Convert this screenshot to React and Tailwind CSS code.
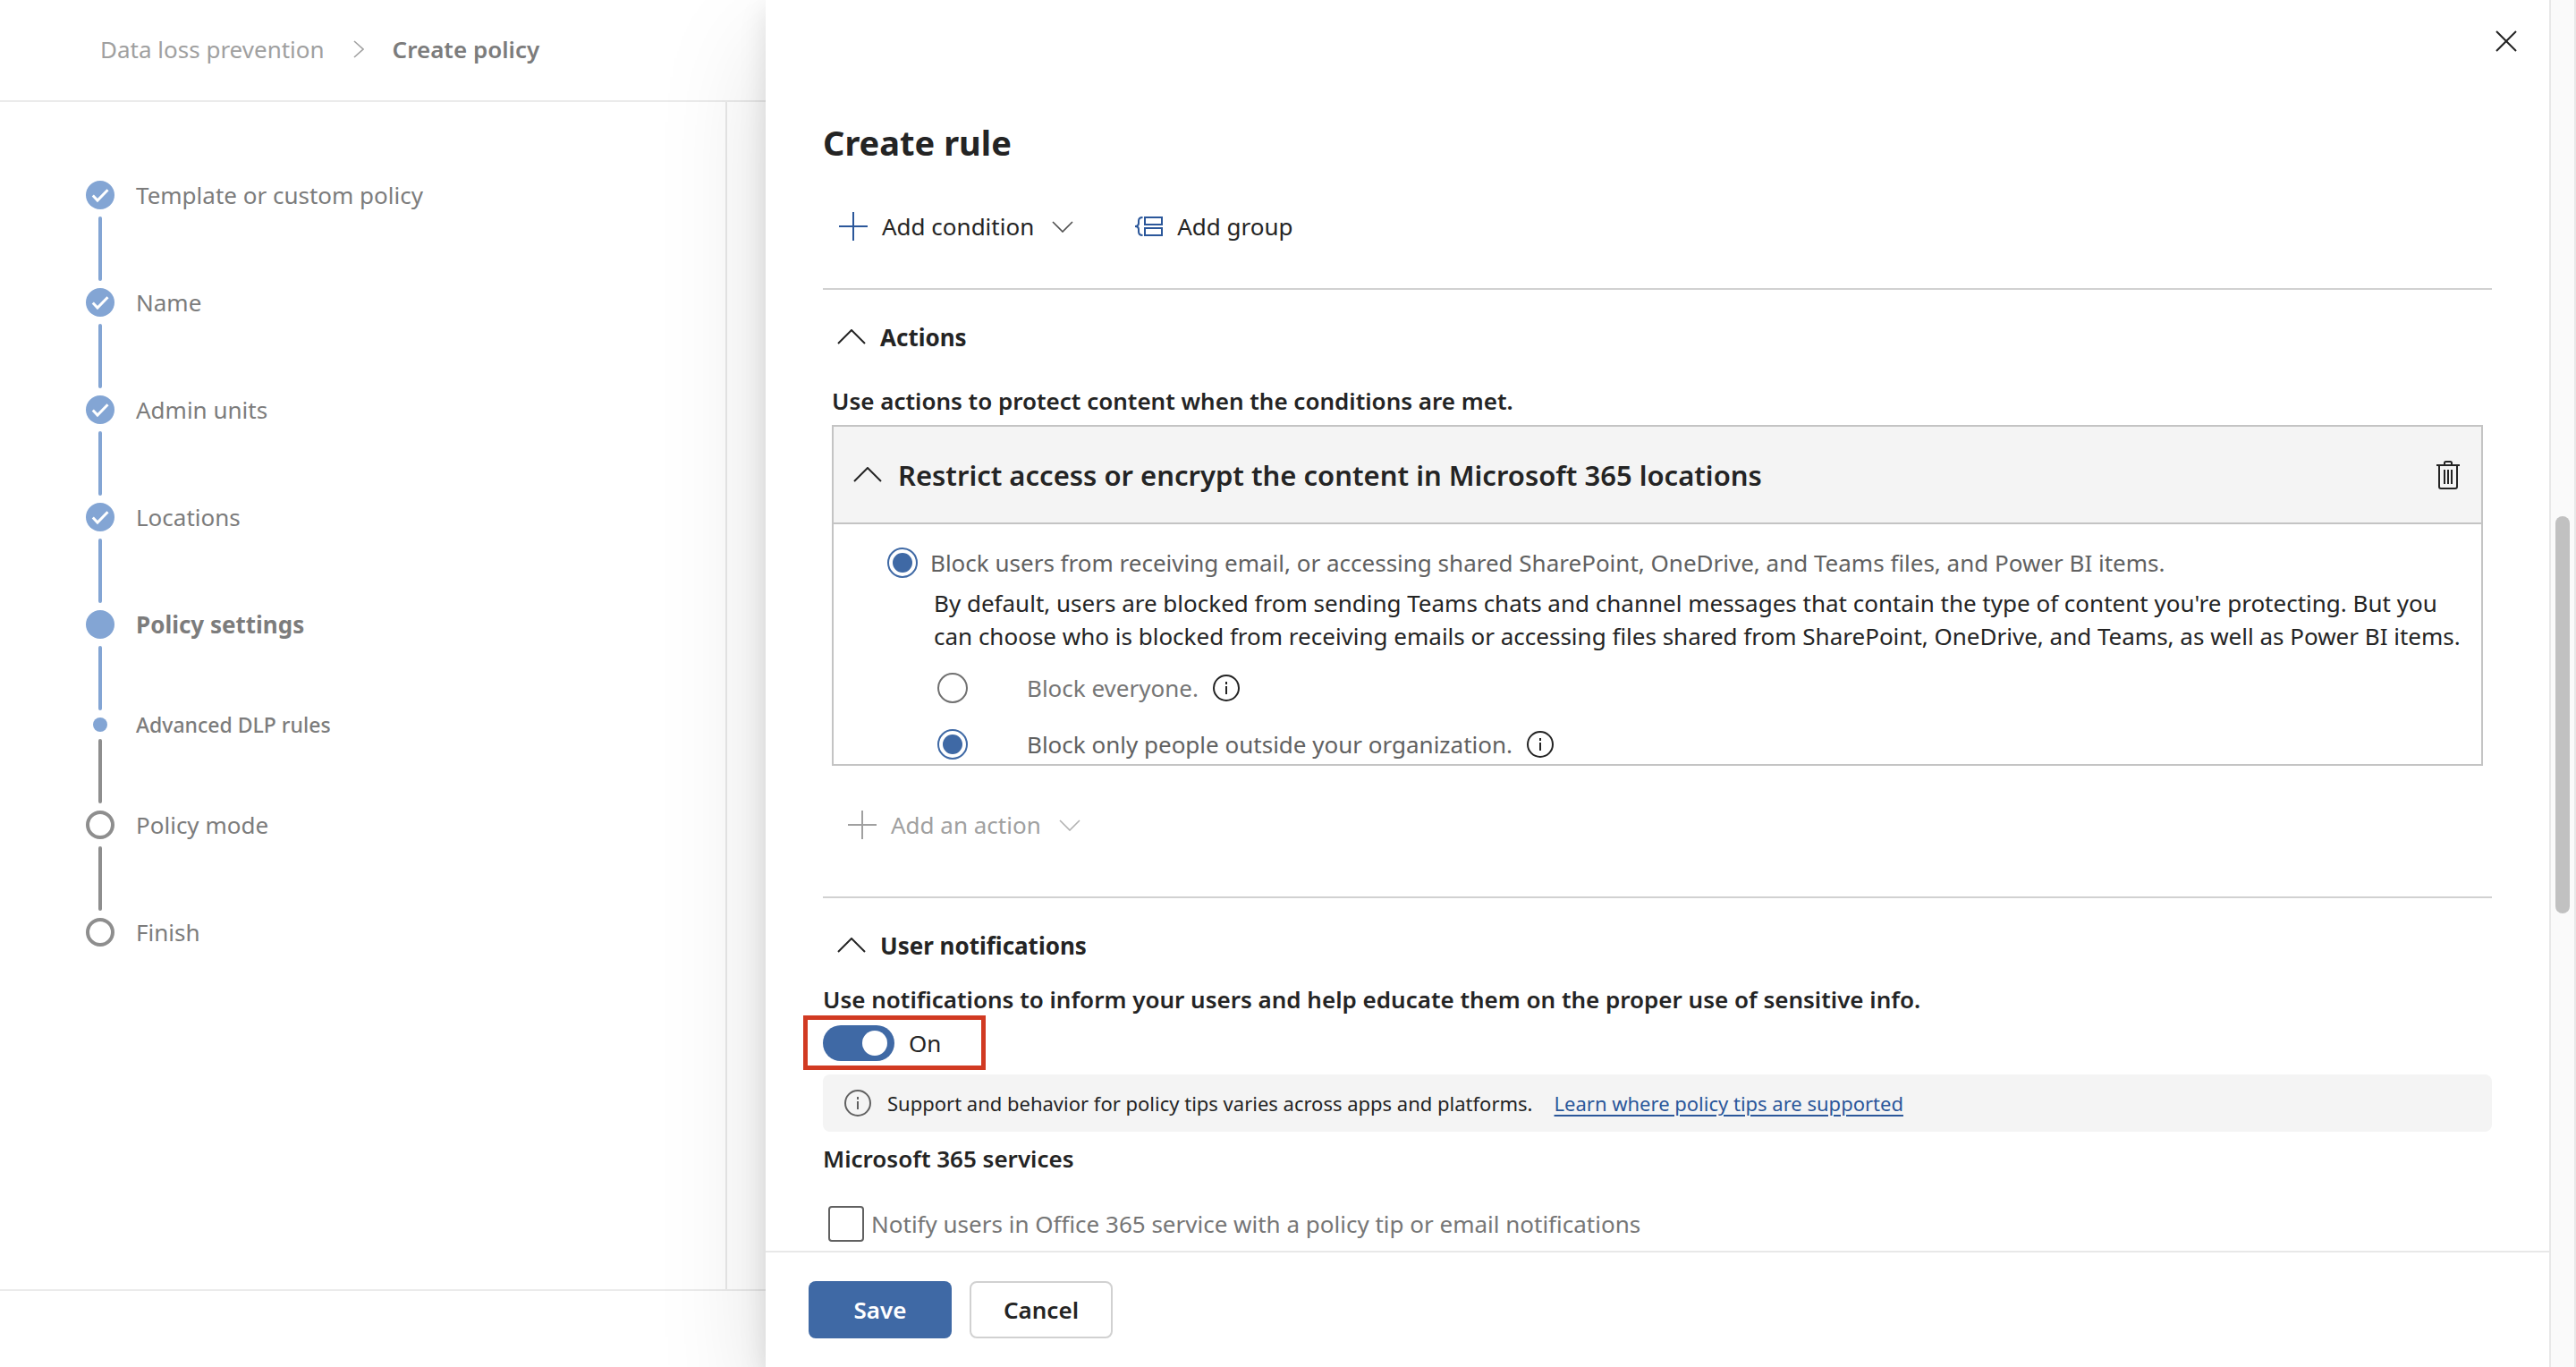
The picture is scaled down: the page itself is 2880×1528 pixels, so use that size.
const steps = [
  { label: 'Template or custom policy', state: 'done' },
  { label: 'Name', state: 'done' },
  { label: 'Admin units', state: 'done' },
  { label: 'Locations', state: 'done' },
  { label: 'Policy settings', state: 'current' },
  { label: 'Advanced DLP rules', state: 'sub' },
  { label: 'Policy mode', state: 'todo' },
  { label: 'Finish', state: 'todo' },
];

function ChevronUp() {
  return (
    <svg className="h-[18px] w-8 shrink-0" viewBox="0 0 32 18" fill="none" stroke="currentColor" strokeWidth="2" aria-hidden="true">
      <path d="M1 16 16 1l15 15" />
    </svg>
  );
}

function ChevronDown() {
  return (
    <svg className="ml-5 h-[13px] w-6 shrink-0 opacity-80" viewBox="0 0 24 13" fill="none" stroke="currentColor" strokeWidth="1.6" aria-hidden="true">
      <path d="m1 1 11 11L23 1" />
    </svg>
  );
}

function Plus({ className }) {
  return (
    <svg className={className} viewBox="0 0 32 32" fill="none" stroke="currentColor" strokeWidth="2" aria-hidden="true">
      <path d="M16 0v32M0 16h32" />
    </svg>
  );
}

function Info({ className }) {
  return (
    <svg className={className} viewBox="0 0 30 30" fill="none" stroke="currentColor" strokeWidth="2" role="img" aria-label="Info">
      <circle cx="15" cy="15" r="14" />
      <path d="M15 13v9" />
      <path d="M15 8v3" />
    </svg>
  );
}

function GroupIcon() {
  return (
    <svg className="h-[22px] w-8 shrink-0 text-[#2b579a]" viewBox="0 0 32 22" fill="none" stroke="currentColor" strokeWidth="2" aria-hidden="true">
      <rect x="12" y="1" width="19" height="8" />
      <rect x="12" y="13" width="19" height="8" />
      <path d="M9.5 1C6 1 5 2.500 5 5v2.500C5 9.500 3.500 11 1 11c2.500 0 4 1.500 4 3.500V17c0 2.500 1 4 4.500 4" />
    </svg>
  );
}

function TrashIcon() {
  return (
    <svg className="h-8 w-[26px]" viewBox="0 0 26 32" fill="none" stroke="currentColor" strokeWidth="2" aria-hidden="true">
      <path d="M0 5h26M9 5V2.500C9 1.500 9.500 1 10.500 1h5c1 0 1.500.5 1.500 1.500V5" />
      <path d="M3 5v24c0 1.500.7 2 2 2h16c1.300 0 2-.5 2-2V5" />
      <path d="M9 10v16M13 10v16M17 10v16" />
    </svg>
  );
}

function StepMarker({ state }) {
  if (state === 'done') {
    return (
      <svg className="size-8" viewBox="0 0 32 32" fill="none" aria-hidden="true">
        <circle cx="16" cy="16" r="16" fill="#83a5d4" />
        <path d="m7.800 16.500 5.200 5.500L24.500 10.300" stroke="#fff" strokeWidth="3" />
      </svg>
    );
  }
  if (state === 'current') return <span className="size-8 rounded-full bg-[#83a5d4]" />;
  if (state === 'sub') return <span className="size-4 rounded-full bg-[#83a5d4]" />;
  return <span className="size-8 rounded-full border-4 border-[#8e8e8e]" />;
}

function Step({ step, last }) {
  const { label, state } = step;
  const text =
    state === 'current' ? 'font-bold' : state === 'sub' ? 'text-[23px] font-medium' : '';
  const line = state === 'done' || state === 'current' ? 'bg-[#83a5d4]' : 'bg-[#8e8e8e]';
  return (
    <li>
      <div className={state === 'sub' ? 'flex h-4 items-center gap-6' : 'flex h-8 items-center gap-6'}>
        <span className="flex w-8 justify-center">
          <StepMarker state={state} />
        </span>
        <span className={text}>{label}</span>
      </div>
      {!last && <div className={`my-2 ml-[14px] h-[72px] w-1 rounded-full ${line}`} />}
    </li>
  );
}

const radio =
  'size-[34px] shrink-0 appearance-none rounded-full border-2 border-[#707070] bg-clip-content p-1 checked:border-[#3f69a5] checked:bg-[#3f69a5]';

function SectionHeader({ children }) {
  return (
    <h2 className="mt-[33px] h-10 font-bold">
      <button type="button" className="flex h-10 items-center gap-4 pl-4" aria-expanded="true">
        <ChevronUp />
        {children}
      </button>
    </h2>
  );
}

function Wizard() {
  return (
    <div className="flex w-[856px] shrink-0 flex-col text-[#7c7c7c]">
      <header className="flex h-[114px] items-center border-b-2 border-[#ebebeb] pb-0.5 pl-28">
        <nav className="flex items-center" aria-label="Breadcrumb">
          <a href="#dlp" className="text-[#a0a0a0]">Data loss prevention</a>
          <svg className="mx-8 h-5 w-3" viewBox="0 0 12 20" fill="none" stroke="#a0a0a0" strokeWidth="1.600" aria-hidden="true">
            <path d="m1 1 10 9-10 9" />
          </svg>
          <span className="font-semibold">Create policy</span>
        </nav>
      </header>
      <div className="w-[813px] flex-1 border-r-2 border-[#e8e8e8] pt-[88px] pl-24">
        <ol>
          {steps.map((s, i) => (
            <Step key={s.label} step={s} last={i === steps.length - 1} />
          ))}
        </ol>
      </div>
      <footer className="h-[87px] border-t-2 border-[#ebebeb]" />
    </div>
  );
}

function ActionCard() {
  return (
    <div className="mx-[10px] mt-[9px] border-2 border-[#c4c4c4]">
      <div className="flex h-[109px] items-center border-b-2 border-[#c4c4c4] bg-[#f4f4f4] pr-6 pl-[22px]">
        <button type="button" className="flex items-center gap-[18px] text-[31px] leading-10 font-semibold" aria-expanded="true">
          <ChevronUp />
          Restrict access or encrypt the content in Microsoft 365 locations
        </button>
        <button type="button" className="ml-auto" aria-label="Delete action">
          <TrashIcon />
        </button>
      </div>
      <div className="pt-[25px] pr-4 pb-1 pl-[60px] leading-9">
        <label className="flex items-center gap-[14px] text-[#616161]">
          <input type="radio" name="restrict" defaultChecked className={radio} />
          Block users from receiving email, or accessing shared SharePoint, OneDrive, and Teams files, and Power BI items.
        </label>
        <p className="mt-[9px] pl-[52px] leading-[37px]">
          By default, users are blocked from sending Teams chats and channel messages that contain the type of content you're protecting. But you can choose who is blocked from receiving emails or accessing files shared from SharePoint, OneDrive, and Teams, as well as Power BI items.
        </p>
        <div className="mt-[21px] flex items-center gap-4 pl-14">
          <label className="flex items-center gap-[66px] text-[#767676]">
            <input type="radio" name="scope" className={radio} />
            Block everyone.
          </label>
          <Info className="size-[30px]" />
        </div>
        <div className="mt-[27px] flex items-center gap-4 pl-14">
          <label className="flex items-center gap-[66px] text-[#616161]">
            <input type="radio" name="scope" defaultChecked className={radio} />
            Block only people outside your organization.
          </label>
          <Info className="size-[30px]" />
        </div>
      </div>
    </div>
  );
}

function RulePanel() {
  return (
    <section className="relative flex min-w-0 flex-1 flex-col bg-white shadow-[0_51px_115px_rgba(0,0,0,0.13),0_10px_29px_rgba(0,0,0,0.11)]" aria-label="Create rule">
      <div className="min-h-0 flex-1 overflow-hidden">
        <div className="flex justify-end pt-[22px] pr-6">
          <button type="button" className="flex size-12 items-center justify-center" aria-label="Close">
            <svg className="size-6" viewBox="0 0 24 24" fill="none" stroke="currentColor" strokeWidth="2" aria-hidden="true">
              <path d="m1 1 22 22M23 1 1 23" />
            </svg>
          </button>
        </div>
        <div className="px-16 pt-[65px]">
          <h1 className="text-[38px] leading-[48px] font-bold">Create rule</h1>
          <div className="mt-[50px] flex h-10 items-center pl-[18px]">
            <button type="button" className="flex items-center">
              <Plus className="mr-4 size-8 text-[#2b579a]" />
              Add condition
              <ChevronDown />
            </button>
            <button type="button" className="ml-[68px] flex items-center gap-4">
              <GroupIcon />
              Add group
            </button>
          </div>

          <hr className="mt-[49px] border-t-2 border-[#d1d1d1]" />
          <SectionHeader>Actions</SectionHeader>
          <p className="mt-[33px] pl-[10px] leading-9 font-semibold">
            Use actions to protect content when the conditions are met.
          </p>
          <ActionCard />
          <button type="button" disabled className="mt-[46px] flex h-10 items-center pl-7 text-[#a0a0a0]">
            <Plus className="mr-4 size-8" />
            Add an action
            <ChevronDown />
          </button>

          <hr className="mt-[60px] border-t-2 border-[#d1d1d1]" />
          <SectionHeader>User notifications</SectionHeader>
          <p className="mt-[22px] leading-9 font-semibold">
            Use notifications to inform your users and help educate them on the proper use of sensitive info.
          </p>
          <label className="-ml-[22px] flex h-[61px] w-[204px] items-center gap-4 border-[5px] border-[#d13a22] pl-[17px]">
            <input
              type="checkbox"
              role="switch"
              defaultChecked
              className="h-10 w-20 shrink-0 appearance-none rounded-full bg-[#3f69a5] p-1.5 pr-2 before:ml-auto before:block before:size-7 before:rounded-full before:bg-white"
            />
            On
          </label>
          <div className="mt-[5px] flex h-16 items-center rounded-lg bg-[#f4f4f4] px-6 text-[22px]">
            <Info className="mr-[18px] size-[30px] text-[#616161]" />
            <span>Support and behavior for policy tips varies across apps and platforms.</span>
            <a href="#policy-tips" className="ml-6 text-[#2b579a] underline decoration-2 underline-offset-4">
              Learn where policy tips are supported
            </a>
          </div>
          <h3 className="mt-3 leading-9 font-semibold">Microsoft 365 services</h3>
          <label className="mt-[35px] flex h-10 items-center gap-2 pl-1.5 text-[#767676]">
            <input type="checkbox" className="size-10 shrink-0 appearance-none rounded-[4px] border-2 border-[#616161]" />
            Notify users in Office 365 service with a policy tip or email notifications
          </label>
        </div>
      </div>
      <footer className="flex gap-5 border-t-2 border-[#e8e8e8] px-12 py-8 font-semibold">
        <button type="button" className="h-16 w-40 rounded-lg bg-[#3f69a5] text-white">Save</button>
        <button type="button" className="h-16 w-40 rounded-lg border-2 border-[#d1d1d1]">Cancel</button>
      </footer>
    </section>
  );
}

export default function App() {
  return (
    <div className="flex h-screen overflow-hidden bg-white font-['Noto_Sans','Open_Sans',sans-serif] text-[26px] leading-9 text-[#242424]">
      <Wizard />
      <RulePanel />
      <div className="relative flex w-[30px] shrink-0 flex-col items-center border-x-2 border-[#e8e8e8] bg-[#fafafa]">
        <div className="flex-[577]" />
        <div className="h-[29%] w-4 rounded-full bg-[#c1c1c1]" />
        <div className="flex-[507]" />
      </div>
    </div>
  );
}
